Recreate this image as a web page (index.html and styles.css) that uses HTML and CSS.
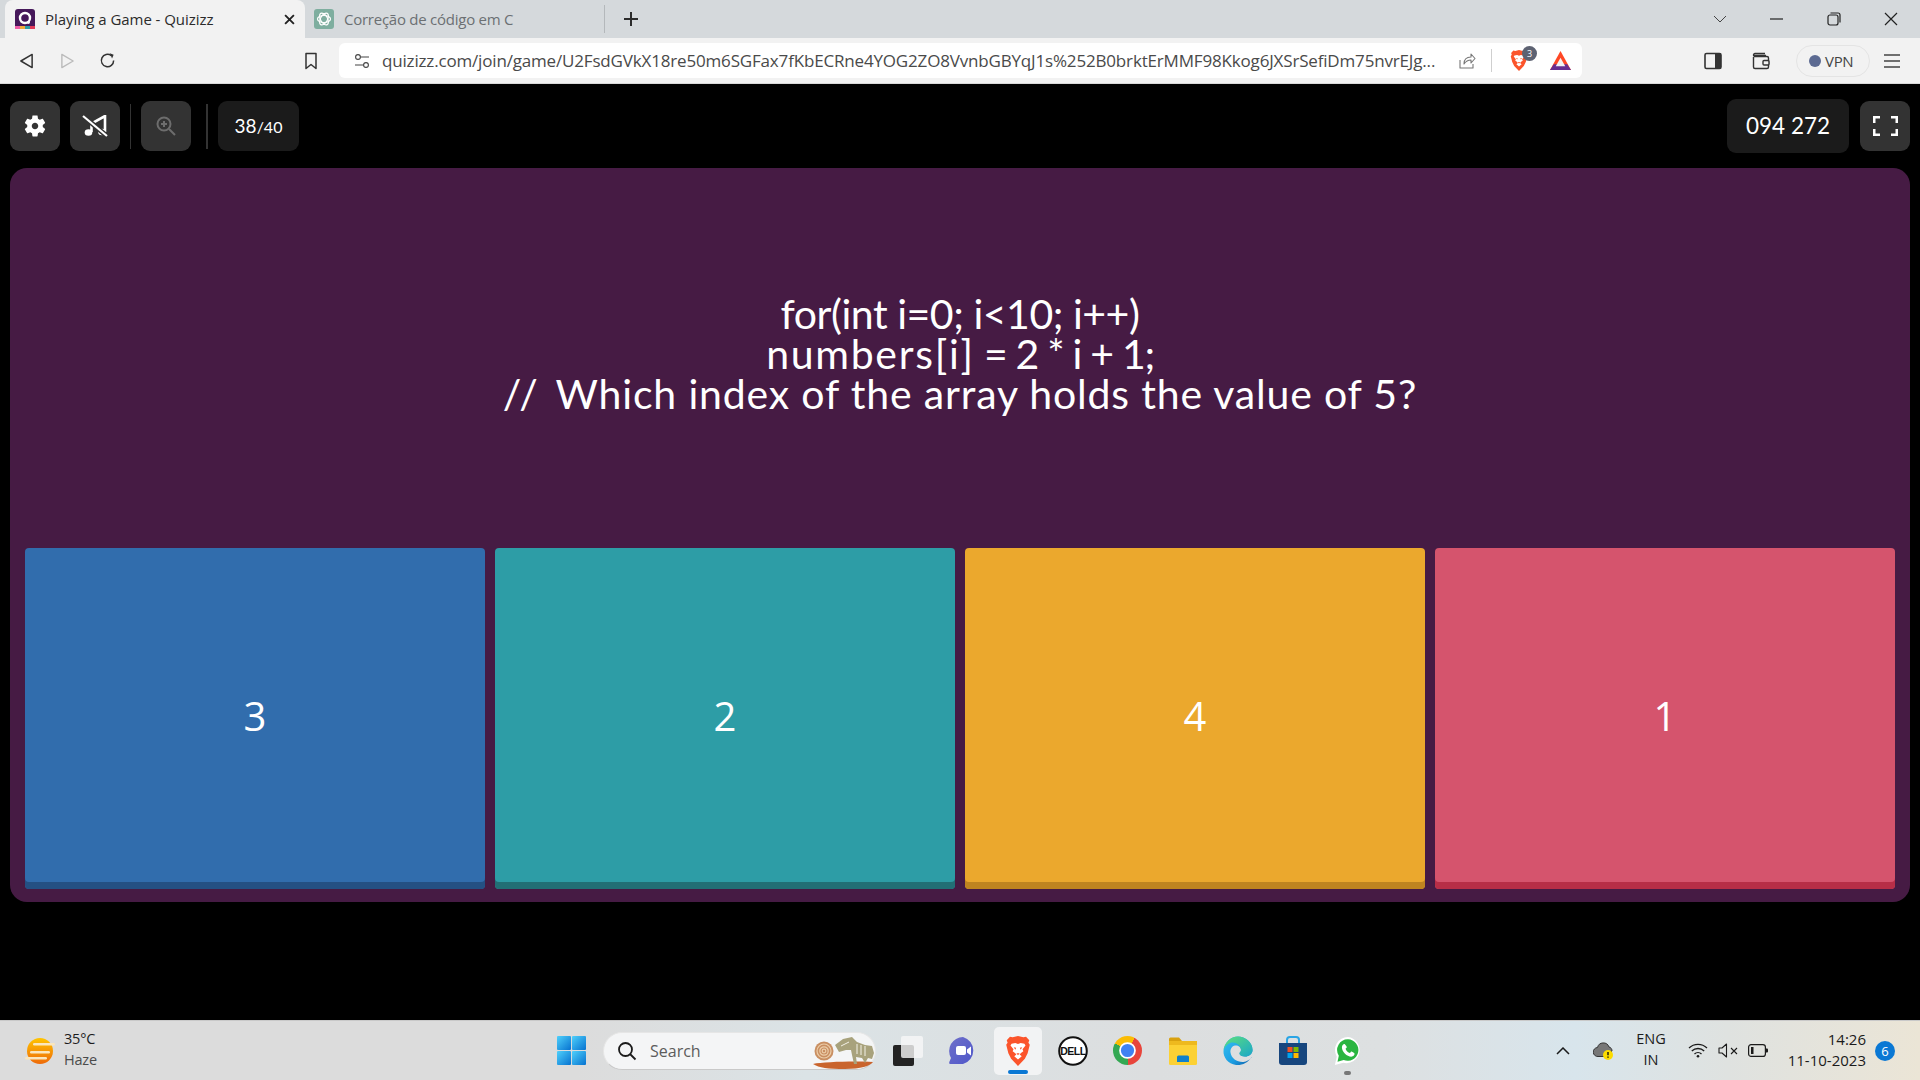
FILE: index.html
```html
<!DOCTYPE html>
<html lang="en">
<head>
<meta charset="utf-8">
<title>Playing a Game - Quizizz</title>
<link rel="stylesheet" href="styles.css">
</head>
<body>
<svg class="defs" width="0" height="0" aria-hidden="true">
  <defs>
    <symbol id="brave" viewBox="0 0 24 28">
      <path fill="#fb542b" d="M12 0 7 1.2 4.5.6 1.5 4l.8 2.2-1.3 2L3 16l2.600 5.200L12 28l6.400-6.800L21 16l2-7.800-1.300-2L22.500 4l-3-3.400L17 1.200z"/>
      <path fill="#fff" d="M12 7.500 9.500 6.500 6 7.200 5 8.800l2.800 3.500-.8 2 2.200 1.500 1.300 1.500-2 1.600L12 22l3.500-3.100-2-1.600 1.300-1.500 2.200-1.500-.8-2L19 8.800l-1-1.600-3.500-.7z"/>
      <path fill="#fb542b" d="M8 10.500l2.300.5-.8 1.800zM16 10.500l-2.300.5.800 1.800zM10.500 16h3L12 18z"/>
    </symbol>
    <linearGradient id="edgeA" x1="0" y1="0" x2="1" y2="1"><stop offset="0" stop-color="#35c1f1"/><stop offset=".6" stop-color="#1b9de2"/><stop offset="1" stop-color="#0c59a4"/></linearGradient>
    <linearGradient id="edgeB" x1="0" y1="0" x2="1" y2="1"><stop offset="0" stop-color="#5ee07a"/><stop offset="1" stop-color="#1aa7c9"/></linearGradient>
    <linearGradient id="winG" x1="0" y1="0" x2="1" y2="1"><stop offset="0" stop-color="#4fd0fb"/><stop offset="1" stop-color="#0672d0"/></linearGradient>
    <linearGradient id="meetG" x1="0" y1="0" x2="1" y2="1"><stop offset="0" stop-color="#6f6fc9"/><stop offset="1" stop-color="#4f58ca"/></linearGradient>
  </defs>
</svg>

<div class="page">
  <header class="tabstrip">
    <div class="tab tab-active">
      <svg class="ico-tab" viewBox="0 0 20 20"><rect width="20" height="20" rx="3" fill="#46185a"/><rect y="17" width="5" height="3" fill="#ef5da8"/><rect x="5" y="17" width="5" height="3" fill="#f2a93b"/><rect x="10" y="17" width="5" height="3" fill="#2d9da6"/><rect x="15" y="17" width="5" height="3" fill="#e23b5a"/><circle cx="10" cy="9" r="5" fill="none" stroke="#fff" stroke-width="2.400"/><circle cx="13.500" cy="13.500" r="1.400" fill="#fff"/></svg>
      <span class="tab-title">Playing a Game - Quizizz</span>
      <svg class="ico-close" viewBox="0 0 10 10"><path d="M1 1l8 8M9 1L1 9" stroke="#222" stroke-width="1.700"/></svg>
    </div>
    <div class="tab tab-idle">
      <svg class="ico-tab" viewBox="0 0 20 20"><rect width="20" height="20" rx="3" fill="#7eae9f"/><g fill="none" stroke="#fff" stroke-width="1.200"><ellipse cx="10" cy="10" rx="6.500" ry="3.500"/><ellipse cx="10" cy="10" rx="6.500" ry="3.500" transform="rotate(60 10 10)"/><ellipse cx="10" cy="10" rx="6.500" ry="3.500" transform="rotate(120 10 10)"/></g></svg>
      <span class="tab-title tab-title-idle">Correção de código em C</span>
    </div>
    <span class="tab-sep"></span>
    <svg class="ico-plus" viewBox="0 0 16 16"><path d="M8 1v14M1 8h14" stroke="#2c2c2c" stroke-width="2"/></svg>
    <div class="win-ctrls">
      <svg class="ico-win-ctl" viewBox="0 0 14 14"><path d="M1 4l6 6 6-6" fill="none" stroke="#444" stroke-width="1"/></svg>
      <svg class="ico-win-ctl" viewBox="0 0 14 14"><path d="M0 7h13" stroke="#222" stroke-width="1.200"/></svg>
      <svg class="ico-win-ctl" viewBox="0 0 14 14"><rect x="1" y="3" width="10" height="10" rx="2" fill="none" stroke="#222" stroke-width="1.200"/><path d="M3.500 1H11a2 2 0 0 1 2 2v7.500" fill="none" stroke="#222" stroke-width="1.200"/></svg>
      <svg class="ico-win-ctl" viewBox="0 0 14 14"><path d="M1 1l12 12M13 1L1 13" stroke="#222" stroke-width="1.200"/></svg>
    </div>
  </header>

  <nav class="toolbar">
    <svg class="ico-nav" viewBox="0 0 16 18"><path d="M14 2v14L2 9z" fill="none" stroke="#333" stroke-width="1.600" stroke-linejoin="round"/></svg>
    <svg class="ico-nav ico-fwd" viewBox="0 0 16 18"><path d="M2 2v14l12-7z" fill="none" stroke="#bbb" stroke-width="1.500" stroke-linejoin="round"/></svg>
    <svg class="ico-nav ico-reload" viewBox="0 0 18 18"><path d="M15.500 9A6.500 6.500 0 1 1 13 3.900" fill="none" stroke="#333" stroke-width="1.600"/><path d="M11.500 1.200l4 1.800-1.700 4z" fill="#333"/></svg>
    <svg class="ico-bookmark" viewBox="0 0 14 18"><path d="M2 1.500h10v15L7 12.500l-5 4z" fill="none" stroke="#333" stroke-width="1.500" stroke-linejoin="round"/></svg>
    <div class="omnibar">
      <svg class="ico-tune" viewBox="0 0 16 16"><g fill="none" stroke="#444" stroke-width="1.100"><circle cx="4" cy="4" r="2.400"/><path d="M6.500 4H15M1 12h8.500"/><circle cx="12" cy="12" r="2.400"/></g></svg>
      <span class="url">quizizz.com/join/game/U2FsdGVkX18re50m6SGFax7fKbECRne4YOG2ZO8VvnbGBYqJ1s%252B0brktErMMF98Kkog6JXSrSefiDm75nvrEJg...</span>
      <svg class="ico-share" viewBox="0 0 18 18"><path d="M2 8v8h13v-4M6 12c0-5 3-7 7-7V2l4 4.500L13 11V8c-3 0-5 1-7 4z" fill="none" stroke="#777" stroke-width="1.100" stroke-linejoin="round"/></svg>
      <span class="omni-sep"></span>
      <span class="brave-wrap">
        <svg class="ico-brave-sm"><use href="#brave"/></svg>
        <span class="badge-count">3</span>
      </span>
      <svg class="ico-bat" viewBox="0 0 24 22"><path d="M12 1 23 21H1z" fill="#ff4724"/><path d="M1 21h22l-4-6H5z" fill="#662d91"/><path d="M12 8l5 9H7z" fill="#f2f2f2"/></svg>
    </div>
    <svg class="ico-side" viewBox="0 0 18 18"><rect x="1" y="1.500" width="16" height="15" rx="1.500" fill="none" stroke="#333" stroke-width="1.600"/><rect x="11" y="1.500" width="6" height="15" fill="#333"/></svg>
    <svg class="ico-wallet" viewBox="0 0 18 18"><path d="M2 3.500h12M1.500 5v10a1.500 1.500 0 0 0 1.500 1.500h12a1.500 1.500 0 0 0 1.500-1.500V6A1.500 1.500 0 0 0 15 4.500H3A1.500 1.500 0 0 1 3 1.500h10" fill="none" stroke="#333" stroke-width="1.400"/><rect x="11" y="8.500" width="6" height="4.500" rx="1" fill="#f2f2f2" stroke="#333" stroke-width="1.400"/></svg>
    <div class="vpn"><span class="vpn-dot"></span><span class="vpn-text">VPN</span></div>
    <svg class="ico-menu" viewBox="0 0 18 16"><path d="M1 2h16M1 8h16M1 14h16" stroke="#444" stroke-width="1.600"/></svg>
  </nav>

  <main class="game">
    <div class="gamebar">
      <button class="gbtn" type="button">
        <svg class="ico-gear" viewBox="0 0 24 24"><path fill="#fff" d="M19.140 12.940c.04-.3.06-.61.06-.94 0-.32-.02-.64-.07-.94l2.030-1.580c.18-.14.23-.41.12-.61l-1.920-3.320c-.12-.22-.37-.29-.59-.22l-2.390.96c-.5-.38-1.030-.7-1.620-.94l-.36-2.540c-.04-.24-.24-.41-.48-.41h-3.840c-.24 0-.43.17-.47.41l-.36 2.540c-.59.24-1.130.57-1.620.94l-2.390-.96c-.22-.08-.47 0-.59.22L2.740 8.870c-.12.21-.08.47.12.61l2.030 1.580c-.05.3-.09.63-.09.94s.02.64.07.94l-2.030 1.580c-.18.14-.23.41-.12.61l1.920 3.320c.12.22.37.29.59.22l2.390-.96c.5.38 1.030.7 1.620.94l.36 2.540c.05.24.24.41.48.41h3.840c.24 0 .44-.17.47-.41l.36-2.540c.59-.24 1.130-.56 1.620-.94l2.390.96c.22.08.47 0 .59-.22l1.920-3.320c.12-.22.07-.47-.12-.61l-2.010-1.580zM12 15c-1.650 0-3-1.350-3-3s1.350-3 3-3 3 1.350 3 3-1.350 3-3 3z"/></svg>
      </button>
      <button class="gbtn" type="button">
        <svg class="ico-music" viewBox="0 0 26 22"><path d="M9.500 17V8.500L23 1v16" fill="none" stroke="#fff" stroke-width="2.600"/><ellipse cx="6.500" cy="17.500" rx="3.800" ry="3.200" fill="#fff"/><ellipse cx="20" cy="17" rx="3.800" ry="3.200" fill="#fff"/><path d="M0 0l26 22" stroke="#333" stroke-width="5"/><path d="M1 1l24 20" stroke="#fff" stroke-width="2.200"/></svg>
      </button>
      <span class="gdiv gdiv-a"></span>
      <button class="gbtn gbtn-zoom" type="button">
        <svg class="ico-zoom" viewBox="0 0 20 20"><g fill="none" stroke="#6d6d6d" stroke-width="2"><circle cx="8" cy="8" r="6.500"/><path d="M13 13l6 6M8 5v6M5 8h6"/></g></svg>
      </button>
      <span class="gdiv gdiv-b"></span>
      <div class="counter"><span class="counter-now">38</span><span class="counter-total">/40</span></div>
      <div class="code">094 272</div>
      <button class="gbtn" type="button">
        <svg class="ico-full" viewBox="0 0 25 20"><path d="M1.250 7V1.250H7M18 1.250h5.750V7M23.750 13v5.750H18M7 18.750H1.250V13" fill="none" stroke="#fff" stroke-width="2.500"/></svg>
      </button>
    </div>

    <section class="panel">
      <div class="question">
        <p class="qline qline-a">for(int i=0; i&lt;10; i++)</p>
        <p class="qline"><span class="q-wide">numbers[i]</span><span class="q-tight"> = 2 * i + 1;</span></p>
        <p class="qline qline-c"><span class="q-slash">//</span> Which index of the array holds the value of 5?</p>
      </div>
      <div class="options">
        <div class="option opt-blue">3</div>
        <div class="option opt-teal">2</div>
        <div class="option opt-yellow">4</div>
        <div class="option opt-red">1</div>
      </div>
    </section>
  </main>

  <footer class="taskbar">
    <div class="weather">
      <svg class="ico-weather" viewBox="0 0 30 28"><defs><linearGradient id="sunG" x1="0" y1="0" x2="0" y2="1"><stop offset="0" stop-color="#ffc400"/><stop offset="1" stop-color="#ee6a0a"/></linearGradient></defs><circle cx="15" cy="14" r="13" fill="url(#sunG)"/><g fill="#fae6bd"><rect x="8" y="6" width="22" height="2.400" rx="1.200"/><rect x="5" y="14" width="20" height="2.400" rx="1.200"/><rect x="0" y="20" width="22" height="2.400" rx="1.200"/></g></svg>
      <div class="weather-text"><span class="w-temp">35°C</span><span class="w-desc">Haze</span></div>
    </div>
    <svg class="ico-start" viewBox="0 0 30 30"><g fill="url(#winG)"><rect width="14.500" height="14.500" rx="1"/><rect x="15.500" width="14.500" height="14.500" rx="1"/><rect y="15.500" width="14.500" height="14.500" rx="1"/><rect x="15.500" y="15.500" width="14.500" height="14.500" rx="1"/></g></svg>
    <div class="search">
      <svg class="ico-search" viewBox="0 0 20 20"><circle cx="8.500" cy="8.500" r="6.500" fill="none" stroke="#1b1b1b" stroke-width="1.800"/><path d="M13 13l5.500 5.500" stroke="#1b1b1b" stroke-width="1.800"/></svg>
      <span class="search-text">Search</span>
      <svg class="ico-fossil" viewBox="0 0 62 38">
        <path d="M0 32c10-2 40-3 60-2-3 4-12 7-28 7C15 37 6 36 0 32z" fill="#c9642d"/>
        <circle cx="11" cy="19" r="9.500" fill="#c98f62"/>
        <g fill="none" stroke="#eccda8" stroke-width="1.200"><circle cx="11" cy="19" r="7"/><circle cx="11" cy="19" r="4.200"/><circle cx="11" cy="19" r="1.800"/></g>
        <path d="M22 13l8-6 9-2 5 5 8 3 7 1 2 7-2 6-4-1-3 5-3-5-6-1 1 7h-3l-2-9-1-5-5 0-7 2z" fill="#a8a27c"/>
        <g stroke="#f3f1e6" stroke-width="1"><path d="M44 12v10M48 13v10M52 14v10M36 10l-8 4"/></g>
      </svg>
    </div>
    <div class="apps">
      <div class="app">
        <svg class="ico-app" viewBox="0 0 30 30"><rect y="9" width="21" height="21" rx="2" fill="#232323"/><rect x="8" width="22" height="22" rx="2" fill="#f7f7f7" opacity=".8"/></svg>
      </div>
      <div class="app">
        <svg class="ico-app" viewBox="0 0 30 30"><path d="M15 1a14 14 0 0 1 0 27H2.500c-1.500 0-1.500-1.500-1-2.500L3 22A14 14 0 0 1 15 1z" fill="url(#meetG)"/><rect x="8" y="10" width="10" height="9" rx="2" fill="#fff"/><path d="M19 13.500l4-3v9l-4-3z" fill="#fff"/></svg>
      </div>
      <div class="app app-active">
        <svg class="ico-app"><use href="#brave"/></svg>
        <span class="app-bar"></span>
      </div>
      <div class="app">
        <svg class="ico-app" viewBox="0 0 30 30"><circle cx="15" cy="15" r="13.800" fill="#fff" stroke="#111" stroke-width="2"/><text class="dell" x="15" y="18.800" text-anchor="middle">DELL</text></svg>
      </div>
      <div class="app"><span class="chrome"><span class="chrome-eye"></span></span></div>
      <div class="app">
        <svg class="ico-app" viewBox="0 0 30 30"><path d="M1 3a1.500 1.500 0 0 1 1.500-1.500H11l3 3.500h-13z" fill="#d9a10f"/><rect x="1" y="5" width="28" height="24" rx="1.500" fill="#fcd134"/><rect x="1" y="5" width="28" height="4" fill="#eeb91e"/><path d="M9 21a1.500 1.500 0 0 1 1.500-1.500h9A1.500 1.500 0 0 1 21 21v5H9z" fill="#0f80cc"/></svg>
      </div>
      <div class="app">
        <svg class="ico-app" viewBox="0 0 30 30"><path d="M28.500 21C25 27 19 29.500 13 29 5 28 0 21 .5 15 1 6.500 8 .5 15 .5S29.500 6 29.500 14c0 4-3.500 6.500-7.500 6.500-3 0-5.500-1-5.500-3 0-1.500 1.500-1.500 1.500-3.500 0-3-3-5-6-4.500-3 .5-5 3.500-4.500 7 .8 6 7 10 13 9.500 3-.3 6-2 8-4.500z" fill="url(#edgeA)"/><path d="M.5 15C1 6.500 8 .5 15 .5S29.500 6 29.500 14c0 4-3.500 6.500-7.500 6.500-3 0-5.500-1-5.500-3 0-1.500 1.500-1.500 1.500-3.500 0-4-4-8-9-7.500C5 7 1.500 10.500.5 15z" fill="url(#edgeB)"/></svg>
      </div>
      <div class="app">
        <svg class="ico-app" viewBox="0 0 30 30"><path d="M9 7V4a3 3 0 0 1 3-3h6a3 3 0 0 1 3 3v3" fill="none" stroke="#2aa5e5" stroke-width="2"/><path d="M1 7h28v19a3 3 0 0 1-3 3H4a3 3 0 0 1-3-3z" fill="#17467e"/><rect x="9.500" y="11" width="5" height="5" fill="#f25022"/><rect x="15.500" y="11" width="5" height="5" fill="#7fba00"/><rect x="9.500" y="17" width="5" height="5" fill="#00a4ef"/><rect x="15.500" y="17" width="5" height="5" fill="#ffb900"/></svg>
      </div>
      <div class="app">
        <svg class="ico-app" viewBox="0 0 30 32"><path d="M15 1a14 14 0 0 0-12 21L1 31l9-2.500A14 14 0 1 0 15 1z" fill="#fff"/><path d="M15 3.500a11.500 11.500 0 0 0-9.800 17.600L3.800 27.500l6.600-1.800A11.500 11.500 0 1 0 15 3.500z" fill="#2ab540"/><path d="M11 8.500c-1 0-2.500 1.500-2.500 3.500 0 5 5.500 10 10 10 2 0 3.500-1.500 3.500-3 0-1-3-2.500-3.500-2.500s-1 1.500-1.500 1.500c-1.500 0-4.500-3-4.500-4.500 0-.5 1.300-1 1.300-1.500S12 8.500 11 8.500z" fill="#fff"/></svg>
        <span class="app-dot"></span>
      </div>
    </div>
    <div class="tray">
      <svg class="ico-chev" viewBox="0 0 14 8"><path d="M1 7l6-6 6 6" fill="none" stroke="#1b1b1b" stroke-width="1.500"/></svg>
      <svg class="ico-cloud" viewBox="0 0 20 18"><path d="M5 14.500a4.500 4.500 0 0 1-.5-9A6 6 0 0 1 16 5c2 .5 3 2 3 4l-6 5.500z" fill="#777" stroke="#333" stroke-width="1"/><circle cx="15" cy="13" r="5" fill="#fcdc00"/><path d="M15 10v3.300M15 14.500v1.200" stroke="#111" stroke-width="1.400"/></svg>
      <div class="lang"><span>ENG</span><span>IN</span></div>
      <svg class="ico-wifi" viewBox="0 0 20 15"><g fill="none" stroke="#1b1b1b" stroke-width="1.300"><path d="M1 5a13 13 0 0 1 18 0M3.800 8a9 9 0 0 1 12.400 0M6.500 11a5 5 0 0 1 7 0"/></g><circle cx="10" cy="13.300" r="1.300" fill="#1b1b1b"/></svg>
      <svg class="ico-speaker" viewBox="0 0 20 15"><path d="M1 5h3l4.500-4v13L4 10H1z" fill="none" stroke="#1b1b1b" stroke-width="1.100" stroke-linejoin="round"/><path d="M13 5l6 6M19 5l-6 6" stroke="#1b1b1b" stroke-width="1.100"/></svg>
      <svg class="ico-batt" viewBox="0 0 20 13"><rect x=".6" y=".6" width="16.800" height="11.800" rx="2.500" fill="none" stroke="#1b1b1b" stroke-width="1.200"/><rect x="3" y="3" width="2.500" height="7" fill="#1b1b1b"/><path d="M18 4.500h1a1 1 0 0 1 1 1v2a1 1 0 0 1-1 1h-1z" fill="#1b1b1b"/></svg>
      <div class="clock"><span>14:26</span><span>11-10-2023</span></div>
      <span class="notif">6</span>
    </div>
  </footer>
</div>
</body>
</html>
```

FILE: styles.css
```css
* { box-sizing: border-box; }

html, body {
  margin: 0;
  height: 100%;
  overflow: hidden;
  background: #000;
}

.defs { position: absolute; }

svg { display: block; flex: none; }

.page {
  height: 1080px;
  display: flex;
  flex-direction: column;
  font-family: "Open Sans", "Noto Sans", sans-serif;
}

/* ---------- tab strip ---------- */
.tabstrip {
  height: 38px;
  flex: none;
  background: #d5d9dc;
  display: flex;
  align-items: center;
  padding-left: 5px;
}

.tab {
  height: 38px;
  display: flex;
  align-items: center;
}

.tab-active {
  width: 300px;
  background: #f2f2f2;
  border-radius: 8px 8px 0 0;
  padding-left: 10px;
}

.tab-idle {
  width: 299px;
  padding-left: 9px;
}

.ico-tab { width: 20px; height: 20px; }

.tab-title {
  margin-left: 10px;
  flex: 1;
  font-size: 15px;
  letter-spacing: -0.050px;
  color: #2b2b2b;
  white-space: nowrap;
}

.tab-title-idle { margin-left: 10px; color: #6c7073; letter-spacing: -0.250px; }

.ico-close { width: 11px; height: 11px; margin-right: 10px; }

.tab-sep { width: 1px; height: 28px; background: #b4b8bb; }

.ico-plus { width: 16px; height: 16px; margin-left: 18px; }

.win-ctrls {
  margin-left: auto;
  display: flex;
  align-items: center;
  gap: 43px;
  padding-right: 22px;
}

.ico-win-ctl { width: 14px; height: 14px; }

/* ---------- toolbar ---------- */
.toolbar {
  height: 46px;
  flex: none;
  background: #f2f2f2;
  border-bottom: 1px solid #d9d9d9;
  display: flex;
  align-items: center;
  padding-left: 19px;
}

.ico-nav { width: 15px; height: 18px; }
.ico-fwd { margin-left: 26px; }
.ico-reload { margin-left: 24px; width: 17px; height: 17px; }
.ico-bookmark { width: 14px; height: 18px; margin-left: 188px; }

.omnibar {
  width: 1243px;
  height: 35px;
  margin-left: 21px;
  background: #fff;
  border-radius: 6px;
  display: flex;
  align-items: center;
  padding-left: 15px;
}

.ico-tune { width: 16px; height: 16px; }

.url {
  margin-left: 12px;
  width: 1063px;
  font-size: 17px;
  letter-spacing: -0.170px;
  color: #4a4a4a;
  white-space: nowrap;
  overflow: hidden;
}

.ico-share { width: 18px; height: 18px; margin-left: 13px; }

.omni-sep { width: 1px; height: 23px; background: #cfcfcf; margin-left: 15px; }

.brave-wrap { position: relative; width: 18px; height: 21px; margin-left: 18px; }

.ico-brave-sm { width: 18px; height: 21px; }

.badge-count {
  position: absolute;
  left: 12px;
  top: -4px;
  width: 15px;
  height: 15px;
  border-radius: 50%;
  background: #5d6272;
  color: #fff;
  font-size: 9px;
  line-height: 15px;
  text-align: center;
}

.ico-bat { width: 23px; height: 21px; margin-left: 21px; }

.ico-side { width: 18px; height: 18px; margin-left: 122px; }
.ico-wallet { width: 18px; height: 18px; margin-left: 30px; }

.vpn {
  width: 74px;
  height: 32px;
  margin-left: 26px;
  border: 1px solid #e4e4e4;
  border-radius: 16px;
  display: flex;
  align-items: center;
  padding-left: 12px;
  gap: 4px;
}

.vpn-dot {
  width: 12px;
  height: 12px;
  border-radius: 50%;
  background: #5c6a92;
}

.vpn-text { font-size: 15px; color: #444; letter-spacing: -0.300px; }

.ico-menu { width: 18px; height: 16px; margin-left: 13px; }

/* ---------- game ---------- */
.game {
  flex: 1;
  min-height: 0;
  background: #000;
  display: flex;
  flex-direction: column;
}

.gamebar {
  height: 84px;
  flex: none;
  display: flex;
  align-items: center;
  padding: 0 10px;
  font-family: "Lato", "Open Sans", sans-serif;
  color: #fff;
}

.gbtn {
  width: 50px;
  height: 50px;
  border: 0;
  padding: 0;
  border-radius: 9px;
  background: #333;
  display: flex;
  align-items: center;
  justify-content: center;
  margin-right: 10px;
}

.gbtn:last-child { margin-right: 0; }
.gbtn-zoom { margin-right: 0; }

.ico-gear { width: 26px; height: 26px; }
.ico-music { width: 26px; height: 22px; }
.ico-zoom { width: 20px; height: 20px; }
.ico-full { width: 25px; height: 20px; }

.gdiv { width: 1px; height: 45px; background: #333; }
.gdiv-a { margin-right: 10px; }
.gdiv-b { width: 2px; margin: 0 10px 0 15px; }

.counter {
  width: 81px;
  height: 50px;
  border-radius: 9px;
  background: #1b1b1b;
  display: flex;
  align-items: baseline;
  justify-content: center;
  line-height: 49px;
}

.counter-now { font-size: 19px; }
.counter-total { font-size: 16px; }

.code {
  margin-left: auto;
  margin-right: 11px;
  width: 122px;
  height: 54px;
  border-radius: 9px;
  background: #1b1b1b;
  font-size: 22.500px;
  line-height: 53px;
  text-align: center;
}

.panel {
  height: 734px;
  flex: none;
  margin: 0 10px;
  padding: 0 15px 13px;
  background: #461b44;
  border-radius: 17px;
  display: flex;
  flex-direction: column;
}

.question {
  flex: 1;
  display: flex;
  flex-direction: column;
  align-items: center;
  justify-content: center;
  padding-bottom: 8px;
  font-family: "Lato", "Open Sans", sans-serif;
  font-size: 41px;
  line-height: 40px;
  color: #fff;
}

.qline { margin: 0; white-space: nowrap; }
.qline-a { letter-spacing: -0.480px; }
.qline-c { letter-spacing: 0.830px; }
.q-slash { letter-spacing: 7px; }
.q-wide { letter-spacing: 1.700px; }
.q-tight { letter-spacing: -1.300px; }

.options {
  height: 341px;
  flex: none;
  display: grid;
  grid-template-columns: repeat(4, 1fr);
  gap: 10px;
}

.option {
  border-radius: 4px;
  padding-bottom: 7px;
  display: flex;
  align-items: center;
  justify-content: center;
  font-family: "Open Sans", "Lato", sans-serif;
  font-size: 40px;
  color: #fff;
}

.opt-blue { background: #316dad; box-shadow: inset 0 -7px 0 #245083; }
.opt-teal { background: #2d9da6; box-shadow: inset 0 -7px 0 #226f75; }
.opt-yellow { background: #eba82d; box-shadow: inset 0 -7px 0 #bf8420; }
.opt-red { background: #d5546d; box-shadow: inset 0 -7px 0 #b72e47; }

/* ---------- taskbar ---------- */
.taskbar {
  height: 60px;
  flex: none;
  border-top: 1px solid #c9c9c9;
  background: linear-gradient(90deg, #dcdcdc 0%, #dcdcdc 30%, #dbe3e6 42%, #dcdedf 60%, #dde0e1 72%, #d8e5ec 82%, #dfe2e0 90%, #ebe5d6 100%);
  display: flex;
  align-items: center;
  padding-left: 25px;
  color: #1b1b1b;
}

.weather { display: flex; align-items: center; width: 532px; }

.ico-weather { width: 30px; height: 28px; }

.weather-text {
  margin-left: 9px;
  padding-bottom: 2px;
  display: flex;
  flex-direction: column;
  font-size: 14.500px;
  line-height: 20.500px;
  letter-spacing: -0.200px;
}

.w-desc { color: #4b4b4b; }

.ico-start { width: 29px; height: 29px; }

.search {
  margin-left: 17px;
  width: 273px;
  height: 38px;
  border-radius: 19px;
  background: #f4f5f6;
  border: 1px solid #e6e6e6;
  border-bottom-color: #c9c9c9;
  display: flex;
  align-items: center;
  padding-left: 13px;
}

.ico-search { width: 20px; height: 20px; }

.search-text {
  margin-left: 13px;
  font-size: 16px;
  color: #5c5c5c;
  flex: 1;
}

.ico-fossil { width: 62px; height: 38px; margin-right: 0; }

.apps { display: flex; align-items: center; margin-left: 4px; }

.app {
  position: relative;
  width: 55px;
  height: 48px;
  display: flex;
  align-items: center;
  justify-content: center;
}

.app-active { background: #f2f3f4; border-radius: 5px; width: 48px; margin: 0 3px 0 4px; }

.ico-app { width: 30px; height: 30px; }

.app-bar {
  position: absolute;
  left: 14px;
  bottom: 1px;
  width: 20px;
  height: 4px;
  border-radius: 2px;
  background: #0a78d4;
}

.app-dot {
  position: absolute;
  left: 24px;
  bottom: 0;
  width: 7px;
  height: 4px;
  border-radius: 2px;
  background: #777;
}

.dell {
  font-family: "Liberation Sans", sans-serif;
  font-size: 10.500px;
  font-weight: 700;
  fill: #111;
  letter-spacing: -0.500px;
}

.chrome {
  width: 29px;
  height: 29px;
  border-radius: 50%;
  background: conic-gradient(from 30deg, #e8453c 0 150deg, #34a853 150deg 270deg, #fbbc04 270deg 360deg);
  display: flex;
  align-items: center;
  justify-content: center;
}

.chrome-eye {
  width: 15px;
  height: 15px;
  border-radius: 50%;
  background: #3f82f1;
  border: 2.500px solid #fff;
  box-sizing: content-box;
  transform: scale(.88);
}

.tray { display: flex; align-items: center; margin-left: auto; padding-right: 25px; }

.ico-chev { width: 14px; height: 8px; }
.ico-cloud { width: 20px; height: 18px; margin-left: 23px; }

.lang {
  width: 40px;
  margin-left: 18px;
  padding-bottom: 2px;
  display: flex;
  flex-direction: column;
  align-items: center;
  font-size: 14.500px;
  line-height: 20.500px;
}

.ico-wifi { width: 20px; height: 15px; margin-left: 17px; }
.ico-speaker { width: 20px; height: 15px; margin-left: 10px; }
.ico-batt { width: 20px; height: 13px; margin-left: 10px; }

.clock {
  width: 98px;
  padding-bottom: 2px;
  display: flex;
  flex-direction: column;
  align-items: flex-end;
  font-size: 15px;
  line-height: 20.500px;
}

.notif {
  width: 20px;
  height: 20px;
  margin-left: 9px;
  border-radius: 50%;
  background: #0a78d4;
  color: #fff;
  font-size: 13px;
  line-height: 20px;
  text-align: center;
}
```
